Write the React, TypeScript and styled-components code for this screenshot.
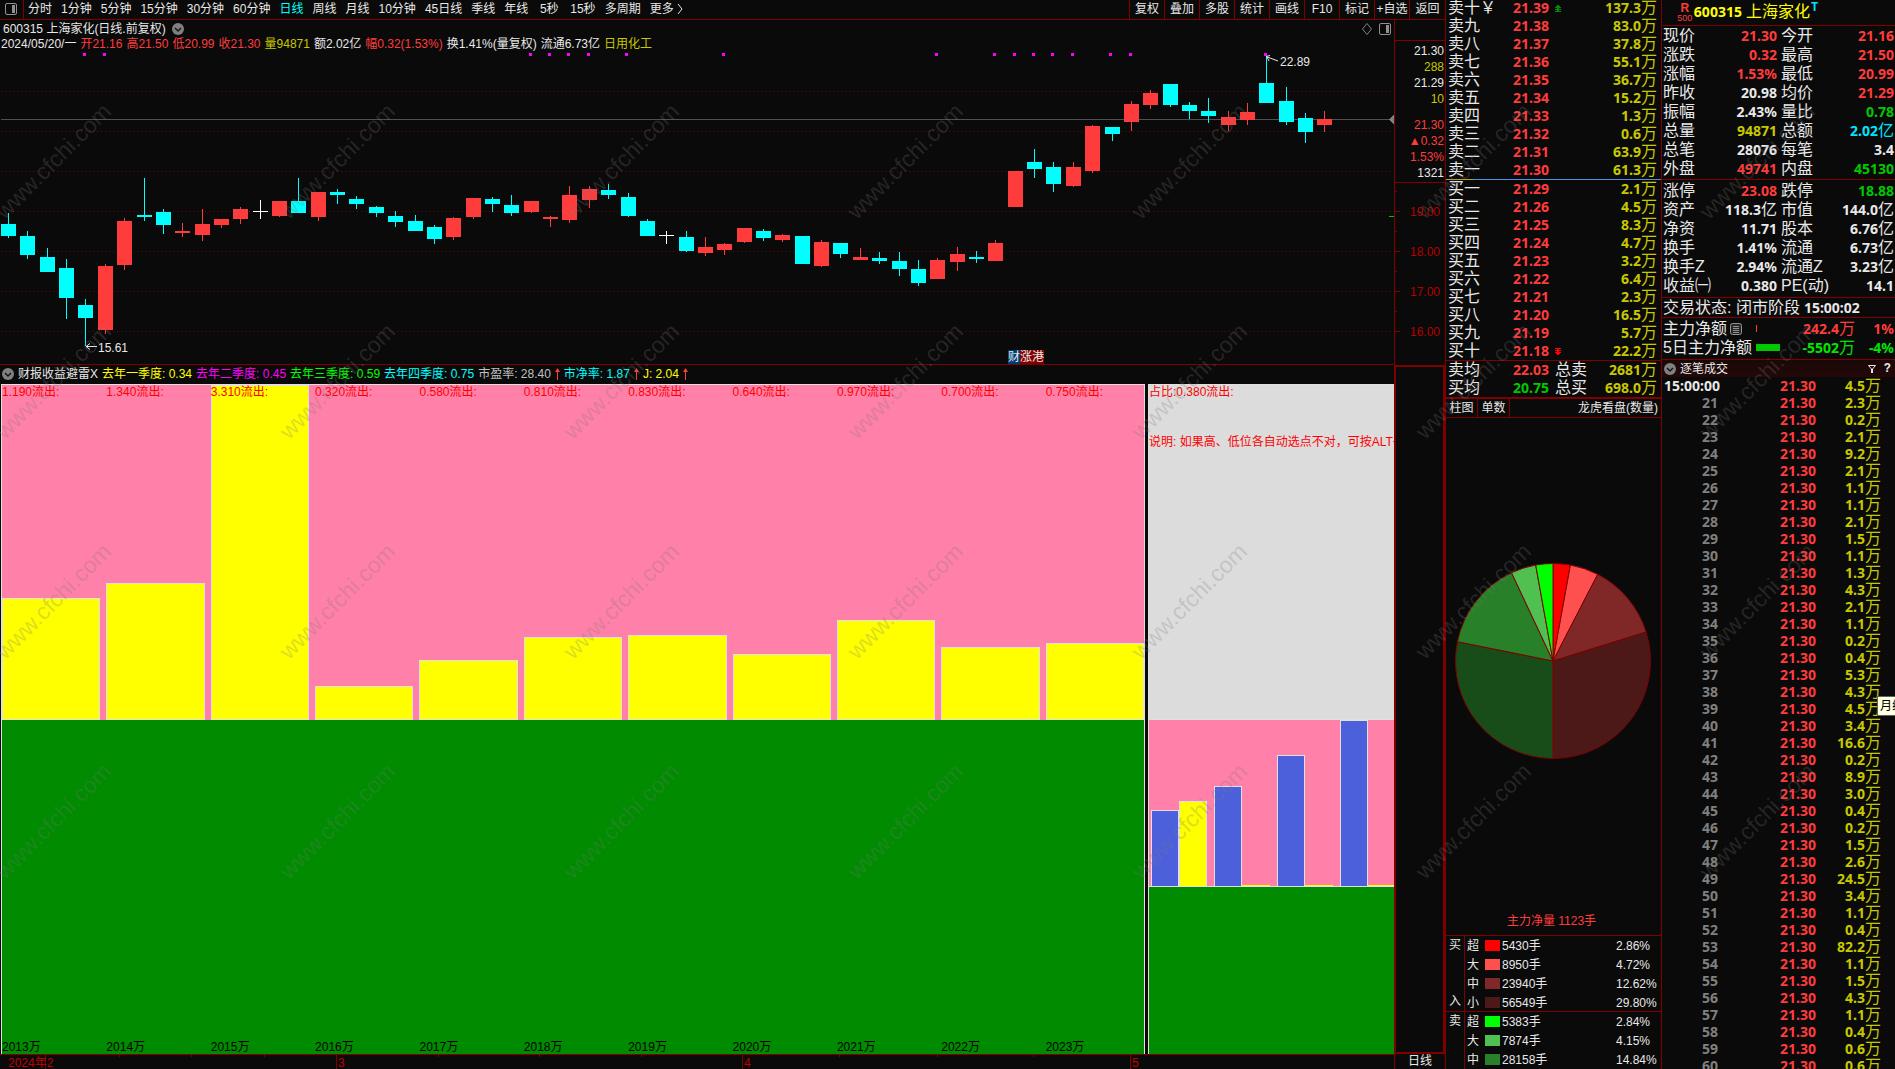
import React from 'react';
import styled, { createGlobalStyle } from 'styled-components';

const C = {
  bg: '#0a0a0a',
  line: '#800000',
  white: '#e8e8e8',
  red: '#ff3c3c',
  pure: '#ff0000',
  green: '#00c800',
  lime: '#00e600',
  yellow: '#c8c800',
  bright: '#ffff00',
  cyan: '#00ffff',
  aqua: '#00e5ff',
  gray: '#808080',
  pink: '#ff80a8',
  field: '#008b00',
  frame: '#e0e0e0',
  blue: '#4c60dc',
};

const Global = createGlobalStyle`
  * { box-sizing: border-box; }
  body {
    margin: 0;
    background: ${C.bg};
    color: ${C.white};
    font: 12px/16px "Liberation Sans", "Noto Sans CJK SC", sans-serif;
  }
  button {
    margin: 0;
    padding: 0;
    border: 0;
    background: none;
    color: inherit;
    font: inherit;
    white-space: nowrap;
    cursor: pointer;
  }
  svg { display: block; flex: none; }
  table, tbody, td, th { display: block; padding: 0; margin: 0; font-weight: 400; text-align: left; }
`;

/* ---------- page frame ---------- */
const Page = styled.div`
  position: relative;
  display: flex;
  height: 100vh;
  overflow: hidden;
`;
const Left = styled.main`
  flex: 1;
  min-width: 0;
  display: flex;
  flex-direction: column;
`;
const Band = styled.section<{ $grow?: boolean; $h?: number }>`
  display: flex;
  min-height: 0;
  flex: ${p => (p.$grow ? '1' : 'none')};
  height: ${p => (p.$h ? p.$h + 'px' : 'auto')};
`;
const Pane = styled.div<{ $line?: boolean }>`
  flex: 1;
  min-width: 0;
  display: flex;
  flex-direction: column;
  border-bottom: ${p => (p.$line ? `1px solid ${C.line}` : '0')};
`;

/* ---------- toolbar ---------- */
const Toolbar = styled.nav`
  display: flex;
  height: 20px;
  border-bottom: 1px solid ${C.line};
`;
const LayoutButton = styled.button`
  width: 24px;
  padding: 0 0 2px 5px;
  border-right: 1px solid ${C.line};
`;
const Periods = styled.div`
  flex: 1;
  display: flex;
  align-items: center;
  gap: 9px;
  padding: 0 0 2px 4px;
`;
const Period = styled.button<{ $on?: boolean }>`
  min-width: 24px;
  color: ${p => (p.$on ? C.cyan : C.white)};
  display: flex;
  align-items: center;
  justify-content: center;
`;
const Tools = styled.div`
  display: grid;
  grid-template-columns: repeat(8, 35px) 36px;
`;
const Tool = styled.button`
  border-left: 1px solid ${C.line};
  padding-bottom: 2px;
`;

/* ---------- chart headings ---------- */
const TitleRow = styled.header`
  display: flex;
  align-items: center;
  gap: 6px;
  height: 18px;
  padding: 0 3px;
`;
const Spacer = styled.span`
  flex: 1;
`;
const QuoteRow = styled.div`
  display: flex;
  align-items: center;
  gap: 4px;
  height: 12px;
  padding-left: 1px;
  white-space: nowrap;
`;
const Ink = styled.span<{ $c?: string }>`
  color: ${p => p.$c || C.white};
  white-space: nowrap;
`;
const CandleBox = styled.div`
  position: relative;
  flex: 1;
  min-height: 0;
`;
const Badge = styled.div`
  position: absolute;
  left: 1008px;
  bottom: 0;
  display: flex;
  line-height: 14px;
`;
const BadgeCell = styled.span<{ $c: string }>`
  background: ${p => p.$c};
`;

/* ---------- price scale ---------- */
const Scale = styled.aside`
  width: 51px;
  display: flex;
  flex-direction: column;
  border-left: 1px solid ${C.line};
`;
const ScaleHead = styled.div`
  height: 21px;
  border-bottom: 1px solid ${C.line};
`;
const ScaleQuotes = styled.div`
  height: 142px;
  padding: 2px 1px 0 0;
  border-bottom: 1px solid ${C.line};
  display: flex;
  flex-direction: column;
  align-items: flex-end;
`;
const ScaleGap = styled.div`
  height: 10px;
`;
const ScaleBox = styled.aside`
  width: 51px;
  border: 2px solid ${C.line};
`;
const ScaleFoot = styled.button`
  width: 51px;
  border-left: 1px solid ${C.line};
  line-height: 15px;
`;

/* ---------- indicator panel ---------- */
const IndicatorHead = styled.header`
  display: flex;
  align-items: center;
  gap: 4px;
  height: 19px;
  padding: 0 0 2px 2px;
`;
const Boards = styled.div`
  flex: 1;
  min-height: 0;
  display: flex;
  gap: 3px;
  padding-left: 1px;
`;
const YearBoard = styled.div`
  flex: 1;
  display: flex;
  flex-direction: column;
  border: solid ${C.frame};
  border-width: 1px 1px 0;
`;
const YearGrid = styled.div<{ $bg: string; $end?: boolean }>`
  flex: 1 1 0;
  display: grid;
  grid-template-columns: repeat(11, 1fr);
  column-gap: 6px;
  background: ${p => p.$bg};
  align-items: ${p => (p.$end ? 'end' : 'stretch')};
`;
const YearCol = styled.div`
  display: flex;
  align-items: flex-end;
  position: relative;
`;
const YearBar = styled.div<{ $h: number }>`
  width: 100%;
  height: ${p => p.$h}%;
  background: ${C.bright};
  border: 1px solid ${C.frame};
`;
const YearValue = styled.span`
  position: absolute;
  top: 0;
  left: 0;
  line-height: 14px;
  color: ${C.pure};
  white-space: nowrap;
`;
const YearName = styled.span`
  color: #000;
  line-height: 14px;
`;
const SideBoard = styled.div`
  width: 246px;
  display: flex;
  flex-direction: column;
  border: solid ${C.frame};
  border-width: 1px 0 0 1px;
  overflow: hidden;
`;
const Note = styled.div`
  flex: 2 1 0;
  background: #dcdcdc;
  color: ${C.pure};
  white-space: nowrap;
  border-bottom: 1px solid ${C.frame};
`;
const NoteLine = styled.p`
  margin: 0 0 36px;
  line-height: 14px;
`;
const Quarters = styled.div`
  flex: 1 1 0;
  display: flex;
  align-items: flex-end;
  gap: 7px;
  padding-left: 2px;
  background: ${C.pink};
  border-bottom: 1px solid ${C.frame};
`;
const Pair = styled.div`
  flex: none;
  width: 56px;
  height: 100%;
  display: grid;
  grid-template-columns: 1fr 1fr;
  align-items: end;
`;
const QBar = styled.div<{ $h: number; $c: string }>`
  height: ${p => p.$h}%;
  min-height: 1px;
  background: ${p => p.$c};
  border: solid ${C.frame};
  border-width: ${p => (p.$h ? '1px 1px 0' : '0')};
`;
const Field = styled.div`
  flex: 1 1 0;
  background: ${C.field};
`;
const Axis = styled.div`
  flex: 1;
  border-top: 1px solid ${C.line};
`;

/* ---------- order book ---------- */
const Book = styled.section`
  width: 216px;
  display: flex;
  flex-direction: column;
  border-left: 1px solid ${C.line};
`;
const BookTable = styled.table<{ $rule: string }>`
  padding: 0 4px 0 2px;
  border-bottom: ${p => p.$rule};
`;
const AskTable = styled(BookTable)`
  border-image: linear-gradient(to right, #c8a020 28px, #4a90e2 28px) 1;
  margin-top: -1px;
`;
const BookRow = styled.tr`
  display: grid;
  grid-template-columns: 65px 42px 1fr auto;
  align-items: center;
  height: 18px;
`;
const Label = styled.th`
  font-size: 16px;
  line-height: 18px;
  white-space: nowrap;
`;
const Cell = styled.td<{ $c?: string; $right?: boolean }>`
  color: ${p => p.$c || C.white};
  font: 700 14px/16px "Noto Sans", "Noto Sans CJK SC", sans-serif;
  text-align: ${p => (p.$right ? 'right' : 'left')} !important;
  white-space: nowrap;
`;
const Unit = styled.span`
  font: 400 16px/16px "Liberation Sans", "Noto Sans CJK SC", sans-serif;
`;
const Sub = styled.td<{ $c?: string }>`
  font-size: 16px;
  line-height: 18px;
  color: ${p => p.$c || C.white};
`;
const Tabs = styled.div`
  display: flex;
  height: 19px;
  border-bottom: 1px solid ${C.line};
  align-items: stretch;
  line-height: 18px;
`;
const Tab = styled.button`
  width: 32px;
  border-right: 1px solid ${C.line};
`;
const TabTitle = styled.span`
  margin-left: auto;
  padding-right: 3px;
`;
const PieArea = styled.div`
  flex: 1;
  min-height: 0;
  display: flex;
  align-items: center;
  justify-content: center;
  padding-right: 2px;
`;
const NetVolume = styled.p`
  margin: 0;
  height: 31px;
  padding: 2px 4px 0 0;
  line-height: 31px;
  text-align: center;
  color: ${C.red};
`;
const Group = styled.div<{ $h: number }>`
  display: flex;
  height: ${p => p.$h}px;
  border-top: 1px solid ${C.line};
`;
const GroupName = styled.div`
  width: 19px;
  display: flex;
  flex-direction: column;
  justify-content: space-between;
  align-items: center;
  border-right: 1px solid ${C.line};
  line-height: 19px;
`;
const FlowTable = styled.table`
  flex: 1;
`;
const FlowRow = styled.tr`
  display: grid;
  grid-template-columns: 18px 17px 1fr 45px;
  align-items: center;
  height: 19px;
  padding-left: 2px;
`;
const Swatch = styled.td<{ $c: string }>`
  width: 15px;
  height: 11px;
  background: ${p => p.$c};
`;
const FlowCell = styled.td`
  white-space: nowrap;
`;

/* ---------- quote details ---------- */
const Info = styled.section`
  width: 234px;
  display: flex;
  flex-direction: column;
  border-left: 1px solid ${C.line};
`;
const StockHead = styled.header`
  display: flex;
  justify-content: center;
  gap: 1px;
  height: 26px;
  padding-top: 3px;
  padding-right: 62px;
  border-bottom: 1px solid ${C.line};
`;
const Rating = styled.div`
  width: 16px;
  color: ${C.red};
  font-size: 9px;
  line-height: 9px;
  text-align: center;
`;
const RatingMark = styled.div`
  font: 700 12px/11px "Liberation Sans", sans-serif;
`;
const Code = styled.span`
  color: ${C.bright};
  font: 700 14px/18px "Noto Sans", sans-serif;
`;
const StockName = styled.h1`
  margin: 0 0 0 3px;
  color: ${C.bright};
  font-size: 16px;
  line-height: 18px;
  font-weight: 400;
`;
const TMark = styled.span`
  color: ${C.aqua};
  font: 700 12px/10px "Liberation Mono", monospace;
`;
const InfoTable = styled.table<{ $pad: string }>`
  padding: ${p => p.$pad};
  border-bottom: 1px solid ${C.line};
`;
const InfoRow = styled.tr`
  display: grid;
  grid-template-columns: 36px 78px 4px 36px 1fr;
  align-items: center;
  height: 19px;
  padding: 0 1px;
`;
const Gap = styled.td``;
const Status = styled.div`
  display: flex;
  align-items: center;
  gap: 4px;
  height: 20px;
  padding-left: 1px;
  border-bottom: 1px solid ${C.line};
  font-size: 16px;
  white-space: nowrap;
`;
const Clock = styled.time`
  font: 700 14px/18px "Noto Sans", sans-serif;
`;
const MoneyRow = styled.tr`
  display: grid;
  grid-template-columns: 93px 24px 1fr 39px;
  align-items: center;
  height: 19px;
  padding: 0 1px;
`;
const MoneyLabel = styled(Label)`
  display: flex;
  align-items: center;
  gap: 3px;
`;
const Bar = styled.td<{ $w: number; $c: string }>`
  width: ${p => p.$w}px;
  height: 7px;
  background: ${p => p.$c};
`;
const TicksHead = styled.header`
  display: flex;
  align-items: center;
  gap: 4px;
  height: 17px;
  padding: 0 4px 0 2px;
`;
const TicksBar = styled.div`
  flex: none;
  background: linear-gradient(#1a0808, #240808);
`;
const Help = styled.button`
  margin-left: 4px;
  font: 700 12px/16px "Liberation Mono", monospace;
`;
const Ticks = styled.table`
  flex: 1;
  min-height: 0;
  overflow: hidden;
`;
const TickRow = styled.tr`
  display: grid;
  grid-template-columns: 54px 62px 36px 1fr;
  align-items: center;
  height: 17px;
  padding: 0 14px 0 2px;
`;

/* ---------- overlays ---------- */
const Tip = styled.div`
  position: absolute;
  left: calc(100% - 18px);
  top: 696px;
  height: 20px;
  padding: 0 2px;
  border: 1px solid #606060;
  background: #ffffe1;
  color: #000;
  line-height: 18px;
  white-space: nowrap;
`;
const Watermarks = styled.div`
  position: absolute;
  left: -89px;
  top: 51px;
  display: grid;
  grid-template-columns: repeat(7, 284px);
  grid-auto-rows: 220px;
  place-items: center;
  pointer-events: none;
`;
const Watermark = styled.span`
  transform: rotate(-45deg);
  color: rgba(120, 120, 120, 0.26);
  font-size: 23px;
  line-height: 28px;
`;

/* ---------- data ---------- */
const PERIODS = ['分时', '1分钟', '5分钟', '15分钟', '30分钟', '60分钟', '日线', '周线', '月线', '10分钟', '45日线', '季线', '年线', '5秒', '15秒', '多周期'];
const TOOLS = ['复权', '叠加', '多股', '统计', '画线', 'F10', '标记', '+自选', '返回'];
const QUOTE: [string, string][] = [
  ['2024/05/20/一', C.white], ['开21.16', C.red], ['高21.50', C.red], ['低20.99', C.red], ['收21.30', C.red],
  ['量94871', C.yellow], ['额2.02亿', C.white], ['幅0.32(1.53%)', C.red], ['换1.41%(量复权)', C.white],
  ['流通6.73亿', C.white], ['日用化工', C.yellow],
];
const INDICATOR: [string, string, boolean][] = [
  ['去年一季度: 0.34', '#ffff00', false], ['去年二季度: 0.45', '#ff00ff', false], ['去年三季度: 0.59', '#00ff00', false],
  ['去年四季度: 0.75', '#00ffff', false], ['市盈率: 28.40', '#c0c0c0', true], ['市净率: 1.87', '#00ffff', true], ['J: 2.04', '#ffff00', true],
];

// high, body top, body bottom, low, kind (c = falling, r = rising, w = unchanged)
const CANDLES: [number, number, number, number, string][] = [
  [213, 224, 236, 238, 'c'], [231, 236, 255, 259, 'c'], [248, 257, 272, 272, 'c'], [259, 268, 298, 319, 'c'], [299, 305, 318, 346, 'c'],
  [264, 266, 330, 334, 'r'], [218, 221, 265, 270, 'r'], [178, 215, 217, 221, 'c'], [209, 212, 225, 234, 'c'], [223, 231, 233, 237, 'r'],
  [209, 224, 235, 241, 'r'], [219, 219, 225, 228, 'r'], [207, 209, 219, 224, 'r'], [200, 211, 212, 219, 'w'], [201, 201, 216, 217, 'r'],
  [178, 201, 213, 213, 'c'], [192, 192, 217, 221, 'r'], [189, 192, 195, 204, 'c'], [196, 199, 204, 209, 'c'], [206, 207, 213, 217, 'c'],
  [211, 216, 222, 227, 'c'], [215, 221, 231, 231, 'c'], [225, 227, 239, 244, 'c'], [217, 218, 237, 240, 'r'], [198, 198, 217, 219, 'r'],
  [197, 199, 204, 212, 'c'], [195, 205, 213, 216, 'c'], [201, 201, 212, 213, 'r'], [216, 217, 219, 227, 'r'], [186, 195, 220, 223, 'r'],
  [186, 189, 200, 208, 'r'], [184, 190, 195, 199, 'c'], [193, 197, 216, 217, 'c'], [219, 221, 236, 236, 'c'], [231, 235, 236, 244, 'w'],
  [231, 237, 251, 252, 'c'], [237, 247, 253, 256, 'r'], [243, 244, 250, 255, 'r'], [228, 228, 242, 243, 'r'], [229, 231, 238, 241, 'c'],
  [234, 235, 240, 242, 'r'], [236, 236, 264, 264, 'c'], [240, 242, 266, 267, 'r'], [243, 243, 254, 258, 'c'], [248, 257, 260, 260, 'r'],
  [252, 258, 261, 264, 'c'], [252, 261, 269, 276, 'c'], [260, 269, 283, 286, 'c'], [258, 260, 279, 279, 'r'], [247, 254, 262, 271, 'r'],
  [251, 257, 259, 263, 'c'], [240, 243, 261, 261, 'r'], [171, 171, 207, 207, 'r'], [149, 162, 169, 178, 'c'], [162, 167, 184, 192, 'c'],
  [162, 167, 186, 187, 'r'], [125, 126, 171, 173, 'r'], [127, 127, 134, 141, 'c'], [101, 104, 122, 131, 'r'], [90, 93, 105, 109, 'r'],
  [84, 84, 105, 107, 'c'], [102, 105, 111, 119, 'c'], [98, 111, 116, 123, 'c'], [111, 117, 125, 131, 'r'], [103, 112, 120, 125, 'r'],
  [56, 83, 103, 103, 'c'], [87, 101, 122, 125, 'c'], [113, 118, 132, 143, 'c'], [111, 119, 125, 132, 'r'],
];
const KIND: Record<string, string> = { c: C.cyan, r: C.red, w: '#ffffff' };
const SIGNALS = [84, 104, 530, 549, 568, 588, 626, 723, 936, 994, 1014, 1033, 1052, 1072, 1110, 1130, 1265];

const YEARS: [number, string, number][] = [
  [2013, '1.190', 36.3], [2014, '1.340', 40.7], [2015, '3.310', 100], [2016, '0.320', 10], [2017, '0.580', 17.8], [2018, '0.810', 24.6],
  [2019, '0.830', 25.2], [2020, '0.640', 19.6], [2021, '0.970', 29.7], [2022, '0.700', 21.6], [2023, '0.750', 22.8],
];
const QUARTERS = [[45.5, 51], [60, 0], [79, 0], [100, 0]];

const ASKS: [string, string, string][] = [
  ['十', '21.39', '137.3万'], ['九', '21.38', '83.0万'], ['八', '21.37', '37.8万'], ['七', '21.36', '55.1万'], ['六', '21.35', '36.7万'],
  ['五', '21.34', '15.2万'], ['四', '21.33', '1.3万'], ['三', '21.32', '0.6万'], ['二', '21.31', '63.9万'], ['一', '21.30', '61.3万'],
];
const BIDS: [string, string, string][] = [
  ['一', '21.29', '2.1万'], ['二', '21.26', '4.5万'], ['三', '21.25', '8.3万'], ['四', '21.24', '4.7万'], ['五', '21.23', '3.2万'],
  ['六', '21.22', '6.4万'], ['七', '21.21', '2.3万'], ['八', '21.20', '16.5万'], ['九', '21.19', '5.7万'], ['十', '21.18', '22.2万'],
];
type InfoItem = [string, string, string, string, string, string];
const INFO_A: InfoItem[] = [
  ['现价', '21.30', C.red, '今开', '21.16', C.red], ['涨跌', '0.32', C.red, '最高', '21.50', C.red],
  ['涨幅', '1.53%', C.red, '最低', '20.99', C.red], ['昨收', '20.98', C.white, '均价', '21.29', C.red],
  ['振幅', '2.43%', C.white, '量比', '0.78', C.green], ['总量', '94871', C.yellow, '总额', '2.02亿', C.aqua],
  ['总笔', '28076', C.white, '每笔', '3.4', C.white], ['外盘', '49741', C.red, '内盘', '45130', C.green],
];
const INFO_B: InfoItem[] = [
  ['涨停', '23.08', C.red, '跌停', '18.88', C.green], ['资产', '118.3亿', C.white, '市值', '144.0亿', C.white],
  ['净资', '11.71', C.white, '股本', '6.76亿', C.white], ['换手', '1.41%', C.white, '流通', '6.73亿', C.white],
  ['换手Z', '2.94%', C.white, '流通Z', '3.23亿', C.white], ['收益㈠', '0.380', C.white, 'PE(动)', '14.1', C.white],
];
const TICKS = ['4.5', '2.3', '0.2', '2.1', '9.2', '2.1', '1.1', '1.1', '2.1', '1.5', '1.1', '1.3', '4.3', '2.1', '1.1', '0.2', '0.4', '5.3', '4.3', '4.5', '3.4',
  '16.6', '0.2', '8.9', '3.0', '0.4', '0.2', '1.5', '2.6', '24.5', '3.4', '1.1', '0.4', '82.2', '1.1', '1.5', '4.3', '1.1', '0.4', '0.6', '0.6'];

const BUY: [string, string, string, string][] = [
  ['超', '#ff0000', '5430手', '2.86%'], ['大', '#ff5050', '8950手', '4.72%'], ['中', '#802828', '23940手', '12.62%'], ['小', '#4c1818', '56549手', '29.80%'],
];
const SELL: [string, string, string, string][] = [
  ['超', '#00ff00', '5383手', '2.84%'], ['大', '#50c050', '7874手', '4.15%'], ['中', '#288028', '28158手', '14.84%'],
];
const SLICES: [number, string][] = [
  [2.86, '#ff0000'], [4.72, '#ff5050'], [12.62, '#802828'], [29.8, '#4c1818'],
  [28.17, '#184c18'], [14.84, '#288028'], [4.15, '#50c050'], [2.84, '#00ff00'],
];

/* ---------- drawings ---------- */
const PanelIcon = () => (
  <svg width="12" height="12" viewBox="0 0 12 12">
    <rect x="0.5" y="0.5" width="11" height="11" rx="1.5" fill="none" stroke="#909090" />
    <rect x="7" y="2" width="3" height="8" fill="#909090" />
  </svg>
);
const ChevronIcon = () => (
  <svg width="12" height="12" viewBox="0 0 12 12">
    <circle cx="6" cy="6" r="6" fill="#808080" />
    <path d="M3 5l3 3 3-3" fill="none" stroke="#141414" strokeWidth="1.5" />
  </svg>
);
const UpArrow = () => (
  <svg width="5" height="12" viewBox="0 0 5 12">
    <path d="M2.500 0L5 4H3v8H2V4H0z" fill={C.red} />
  </svg>
);
const NoteIcon = () => (
  <svg width="12" height="12" viewBox="0 0 12 12">
    <rect x="0.5" y="0.5" width="11" height="11" rx="2" fill="#282828" stroke="#909090" />
    <path d="M3 3.500h6M3 5.500h6M3 7.500h6M3 9.500h6" stroke="#909090" />
  </svg>
);
const LimitMark = ({ up }: { up?: boolean }) => (
  <svg width="6" height="7" viewBox="0 0 6 7" shapeRendering="crispEdges">
    {up
      ? <path d="M2 0h2v1h1v1h1v1H4v1h2v1H4v1h2v1H0V6h2V5H0V4h2V3H0V2h1V1h1z" fill="#008b00" />
      : <path d="M0 0h6v1H4v1h2v1H4v1h2v1H5v1H4v1H2V6H1V5H0V4h2V3H0V2h2V1H0z" fill="#ff0000" />}
  </svg>
);

const CandleChart = () => (
  <svg width="100%" height="100%" shapeRendering="crispEdges">
    <g transform="translate(0,-50)">
      {[91, 131, 171, 211, 251, 291, 331].map(y => (
        <line key={y} x1="1" x2="1392" y1={y + 0.5} y2={y + 0.5} stroke="#780000" strokeDasharray="1 3" />
      ))}
      <line x1="1" x2="1390" y1="119.5" y2="119.5" stroke="#505050" />
      <path d="M1394 115v9l-5-4.500z" fill="#808080" />
      <rect x="1389" y="216" width="5" height="1" fill="#00c800" />
      {SIGNALS.map(x => <rect key={x} x={x - 1} y="53" width="3" height="3" fill="#ff00ff" />)}
      {CANDLES.map(([hi, top, bottom, lo, kind], i) => {
        const x = Math.round(8 + 19.36 * i);
        return (
          <g key={i} fill={KIND[kind]}>
            <rect x={x} y={hi} width="1" height={lo - hi} />
            <rect x={x - 7} y={top} width="15" height={bottom - top} />
          </g>
        );
      })}
      <g shapeRendering="auto" stroke={C.white} fill="none">
        <path d="M86 346.500h11M86 346.500l4-3M86 346.500l4 3" />
        <path d="M1266 56.500l12 4.500M1266 56.500l4-1M1267 57l2 4" />
      </g>
      <text x="98" y="352" fill={C.white} fontSize="12">15.61</text>
      <text x="1280" y="66" fill={C.white} fontSize="12">22.89</text>
    </g>
  </svg>
);

const ScaleTicks = () => (
  <svg width="100%" height="181" shapeRendering="crispEdges">
    {[8, 48, 88, 128].map(y => <rect key={y} x="0" y={y} width="2" height="1" fill={C.line} />)}
    {[19, 18, 17, 16].map((v, i) => (
      <g key={v}>
        <rect x="0" y={28 + i * 40} width="5" height="1" fill={C.line} />
        <text x="15" y={33 + i * 40} fontSize="12" fill="#b40000">{v}.00</text>
      </g>
    ))}
  </svg>
);

const TimeAxis = () => (
  <svg width="100%" height="14" shapeRendering="crispEdges" fill={C.line}>
    {[45, 336, 742, 1130].map(x => <rect key={x} x={x} y="0" width="1" height="14" />)}
    {[119, 191, 264, 438, 539, 641, 839, 937, 1033].map(x => <rect key={x} x={x} y="0" width="1" height="2" />)}
    <g fontSize="12" fill="#c00000">
      <text x="8" y="12">2024年2</text>
      <text x="338" y="12">3</text>
      <text x="744" y="12">4</text>
      <text x="1132" y="12">5</text>
    </g>
  </svg>
);

const Pie = () => {
  let acc = 0;
  const at = (f: number) => {
    const a = f * 2 * Math.PI;
    return `${100 + 97.5 * Math.sin(a)} ${100 - 97.5 * Math.cos(a)}`;
  };
  return (
    <svg width="200" height="200" viewBox="0 0 200 200">
      {SLICES.map(([pct, color]) => {
        const from = acc / 100;
        acc += pct;
        return <path key={color} d={`M100 100L${at(from)}A97.5 97.5 0 0 1 ${at(acc / 100)}Z`} fill={color} stroke="#800000" />;
      })}
    </svg>
  );
};

/* ---------- parts ---------- */
const Amount = ({ v }: { v: string }) => {
  const m = v.match(/^(.*?)([万亿]?)$/)!;
  return <>{m[1]}{m[2] && <Unit>{m[2]}</Unit>}</>;
};

const BookLevel = ({ side, row, mark }: { side: string; row: [string, string, string]; mark?: React.ReactNode }) => (
  <BookRow>
    <Label scope="row">{side}{row[0]}{side === '卖' && row[0] === '十' && '￥'}</Label>
    <Cell $c={C.red}>{row[1]}</Cell>
    <Sub>{mark}</Sub>
    <Cell $c={C.yellow} $right><Amount v={row[2]} /></Cell>
  </BookRow>
);

const InfoRows = ({ rows, pad }: { rows: InfoItem[]; pad: string }) => (
  <InfoTable $pad={pad}>
    <tbody>
      {rows.map(([a, av, ac, b, bv, bc]) => (
        <InfoRow key={a}>
          <Label scope="row">{a}</Label>
          <Cell $c={ac} $right><Amount v={av} /></Cell>
          <Gap />
          <Label scope="row">{b}</Label>
          <Cell $c={bc} $right><Amount v={bv} /></Cell>
        </InfoRow>
      ))}
    </tbody>
  </InfoTable>
);

const Flow = ({ names, rows, h }: { names: string[]; rows: [string, string, string, string][]; h: number }) => (
  <Group $h={h}>
    <GroupName>{names.map(n => <span key={n}>{n}</span>)}</GroupName>
    <FlowTable>
      <tbody>
        {rows.map(([n, c, v, p]) => (
          <FlowRow key={n}>
            <FlowCell>{n}</FlowCell>
            <Swatch $c={c} />
            <FlowCell>{v}</FlowCell>
            <FlowCell>{p}</FlowCell>
          </FlowRow>
        ))}
      </tbody>
    </FlowTable>
  </Group>
);

export default function App() {
  return (
    <Page>
      <Global />
      <Left>
        <Toolbar>
          <LayoutButton aria-label="布局"><PanelIcon /></LayoutButton>
          <Periods>
            {PERIODS.map(p => <Period key={p} $on={p === '日线'}>{p}</Period>)}
            <Period>
              更多
              <svg width="10" height="12" viewBox="0 0 10 12"><path d="M4 1l4 5-4 5" fill="none" stroke={C.white} /></svg>
            </Period>
          </Periods>
          <Tools>{TOOLS.map(t => <Tool key={t}>{t}</Tool>)}</Tools>
        </Toolbar>

        <Band $h={345}>
          <Pane $line>
            <TitleRow>
              <Ink>600315 上海家化(日线.前复权)</Ink>
              <button aria-label="展开"><ChevronIcon /></button>
              <Spacer />
              <svg width="12" height="12" viewBox="0 0 12 12"><path d="M6 0.500l4.500 5.500L6 11.500 1.500 6z" fill="none" stroke="#808080" /></svg>
              <button aria-label="侧栏"><PanelIcon /></button>
            </TitleRow>
            <QuoteRow>{QUOTE.map(([t, c]) => <Ink key={t} $c={c}>{t}</Ink>)}</QuoteRow>
            <CandleBox>
              <CandleChart />
              <Badge>
                <BadgeCell $c="#003c70">财</BadgeCell>
                <BadgeCell $c="#800000">涨</BadgeCell>
                <BadgeCell $c="#800000">港</BadgeCell>
              </Badge>
            </CandleBox>
          </Pane>
          <Scale>
            <ScaleHead />
            <ScaleQuotes>
              <Ink>21.30</Ink>
              <Ink $c={C.yellow}>288</Ink>
              <Ink>21.29</Ink>
              <Ink $c={C.yellow}>10</Ink>
              <ScaleGap />
              <Ink $c={C.red}>21.30</Ink>
              <Ink $c={C.red}>▲0.32</Ink>
              <Ink $c={C.red}>1.53%</Ink>
              <Ink>1321</Ink>
            </ScaleQuotes>
            <ScaleTicks />
          </Scale>
        </Band>

        <Band $grow>
          <Pane>
            <IndicatorHead>
              <button aria-label="指标"><ChevronIcon /></button>
              <Ink>财报收益避雷X</Ink>
              {INDICATOR.map(([t, c, up]) => (
                <React.Fragment key={t}>
                  <Ink $c={c}>{t}</Ink>
                  {up && <UpArrow />}
                </React.Fragment>
              ))}
            </IndicatorHead>
            <Boards>
              <YearBoard>
                <YearGrid $bg={C.pink}>
                  {YEARS.map(([y, v, h]) => (
                    <YearCol key={y}>
                      <YearBar $h={h} />
                      <YearValue>{v}流出:</YearValue>
                    </YearCol>
                  ))}
                </YearGrid>
                <YearGrid $bg={C.field} $end>
                  {YEARS.map(([y]) => <YearName key={y}>{y}万</YearName>)}
                </YearGrid>
              </YearBoard>
              <SideBoard>
                <Note>
                  <NoteLine>占比:0.380流出:</NoteLine>
                  <NoteLine>说明: 如果高、低位各自动选点不对，可按ALT+</NoteLine>
                </Note>
                <Quarters>
                  {QUARTERS.map(([a, b], i) => (
                    <Pair key={i}>
                      <QBar $h={a} $c={C.blue} />
                      <QBar $h={b} $c={C.bright} />
                    </Pair>
                  ))}
                </Quarters>
                <Field />
              </SideBoard>
            </Boards>
          </Pane>
          <ScaleBox />
        </Band>

        <Band $h={15}>
          <Axis><TimeAxis /></Axis>
          <ScaleFoot>日线</ScaleFoot>
        </Band>
      </Left>

      <Book>
        <AskTable $rule="1px solid #4a90e2">
          <tbody>
            {ASKS.map((r, i) => <BookLevel key={r[0]} side="卖" row={r} mark={i === 0 && <LimitMark up />} />)}
          </tbody>
        </AskTable>
        <BookTable $rule={`1px solid ${C.line}`}>
          <tbody>
            {BIDS.map((r, i) => <BookLevel key={r[0]} side="买" row={r} mark={i === 9 && <LimitMark />} />)}
          </tbody>
        </BookTable>
        <BookTable $rule={`2px solid ${C.line}`}>
          <tbody>
            <BookRow>
              <Label scope="row">卖均</Label>
              <Cell $c={C.red}>22.03</Cell>
              <Sub>总卖</Sub>
              <Cell $c={C.yellow} $right><Amount v="2681万" /></Cell>
            </BookRow>
            <BookRow>
              <Label scope="row">买均</Label>
              <Cell $c={C.green}>20.75</Cell>
              <Sub>总买</Sub>
              <Cell $c={C.yellow} $right><Amount v="698.0万" /></Cell>
            </BookRow>
          </tbody>
        </BookTable>
        <Tabs>
          <Tab>柱图</Tab>
          <Tab>单数</Tab>
          <TabTitle>龙虎看盘(数量)</TabTitle>
        </Tabs>
        <PieArea><Pie /></PieArea>
        <NetVolume>主力净量 1123手</NetVolume>
        <Flow names={['买', '入']} rows={BUY} h={76} />
        <Flow names={['卖']} rows={SELL} h={58} />
      </Book>

      <Info>
        <StockHead>
          <Rating><RatingMark>R</RatingMark>500</Rating>
          <Code>600315</Code>
          <StockName>上海家化</StockName>
          <TMark>T</TMark>
        </StockHead>
        <InfoRows rows={INFO_A} pad="0 0 1px" />
        <InfoRows rows={INFO_B} pad="1px 0 2px" />
        <Status>交易状态: 闭市阶段<Clock>15:00:02</Clock></Status>
        <InfoTable $pad="1px 0 2px">
          <tbody>
            <MoneyRow>
              <MoneyLabel scope="row">主力净额<NoteIcon /></MoneyLabel>
              <Bar $w={1} $c={C.red} />
              <Cell $c={C.red} $right><Amount v="242.4万" /></Cell>
              <Cell $c={C.red} $right>1%</Cell>
            </MoneyRow>
            <MoneyRow>
              <MoneyLabel scope="row">5日主力净额</MoneyLabel>
              <Bar $w={24} $c={C.green} />
              <Cell $c={C.lime} $right><Amount v="-5502万" /></Cell>
              <Cell $c={C.lime} $right>-4%</Cell>
            </MoneyRow>
          </tbody>
        </InfoTable>
        <TicksBar>
          <TicksHead>
            <ChevronIcon />
            <Ink>逐笔成交</Ink>
            <Spacer />
            <button aria-label="筛选">
              <svg width="8" height="8" viewBox="0 0 8 8"><path d="M0.500 0.500h7L4.500 4v4h-1V4z" fill="none" stroke={C.white} /></svg>
            </button>
            <Help>?</Help>
          </TicksHead>
        </TicksBar>
        <Ticks>
          <tbody>
            {TICKS.map((v, i) => (
              <TickRow key={i}>
                <Cell $c={i ? C.gray : C.white} $right>{i ? 20 + i : '15:00:00'}</Cell>
                <Gap />
                <Cell $c={C.red}>21.30</Cell>
                <Cell $c={C.yellow} $right><Amount v={v + '万'} /></Cell>
              </TickRow>
            ))}
          </tbody>
        </Ticks>
      </Info>

      <Tip role="tooltip">月线</Tip>
      <Watermarks aria-hidden="true">
        {Array.from({ length: 28 }, (_, i) => <Watermark key={i}>www.cfchi.com</Watermark>)}
      </Watermarks>
    </Page>
  );
}
